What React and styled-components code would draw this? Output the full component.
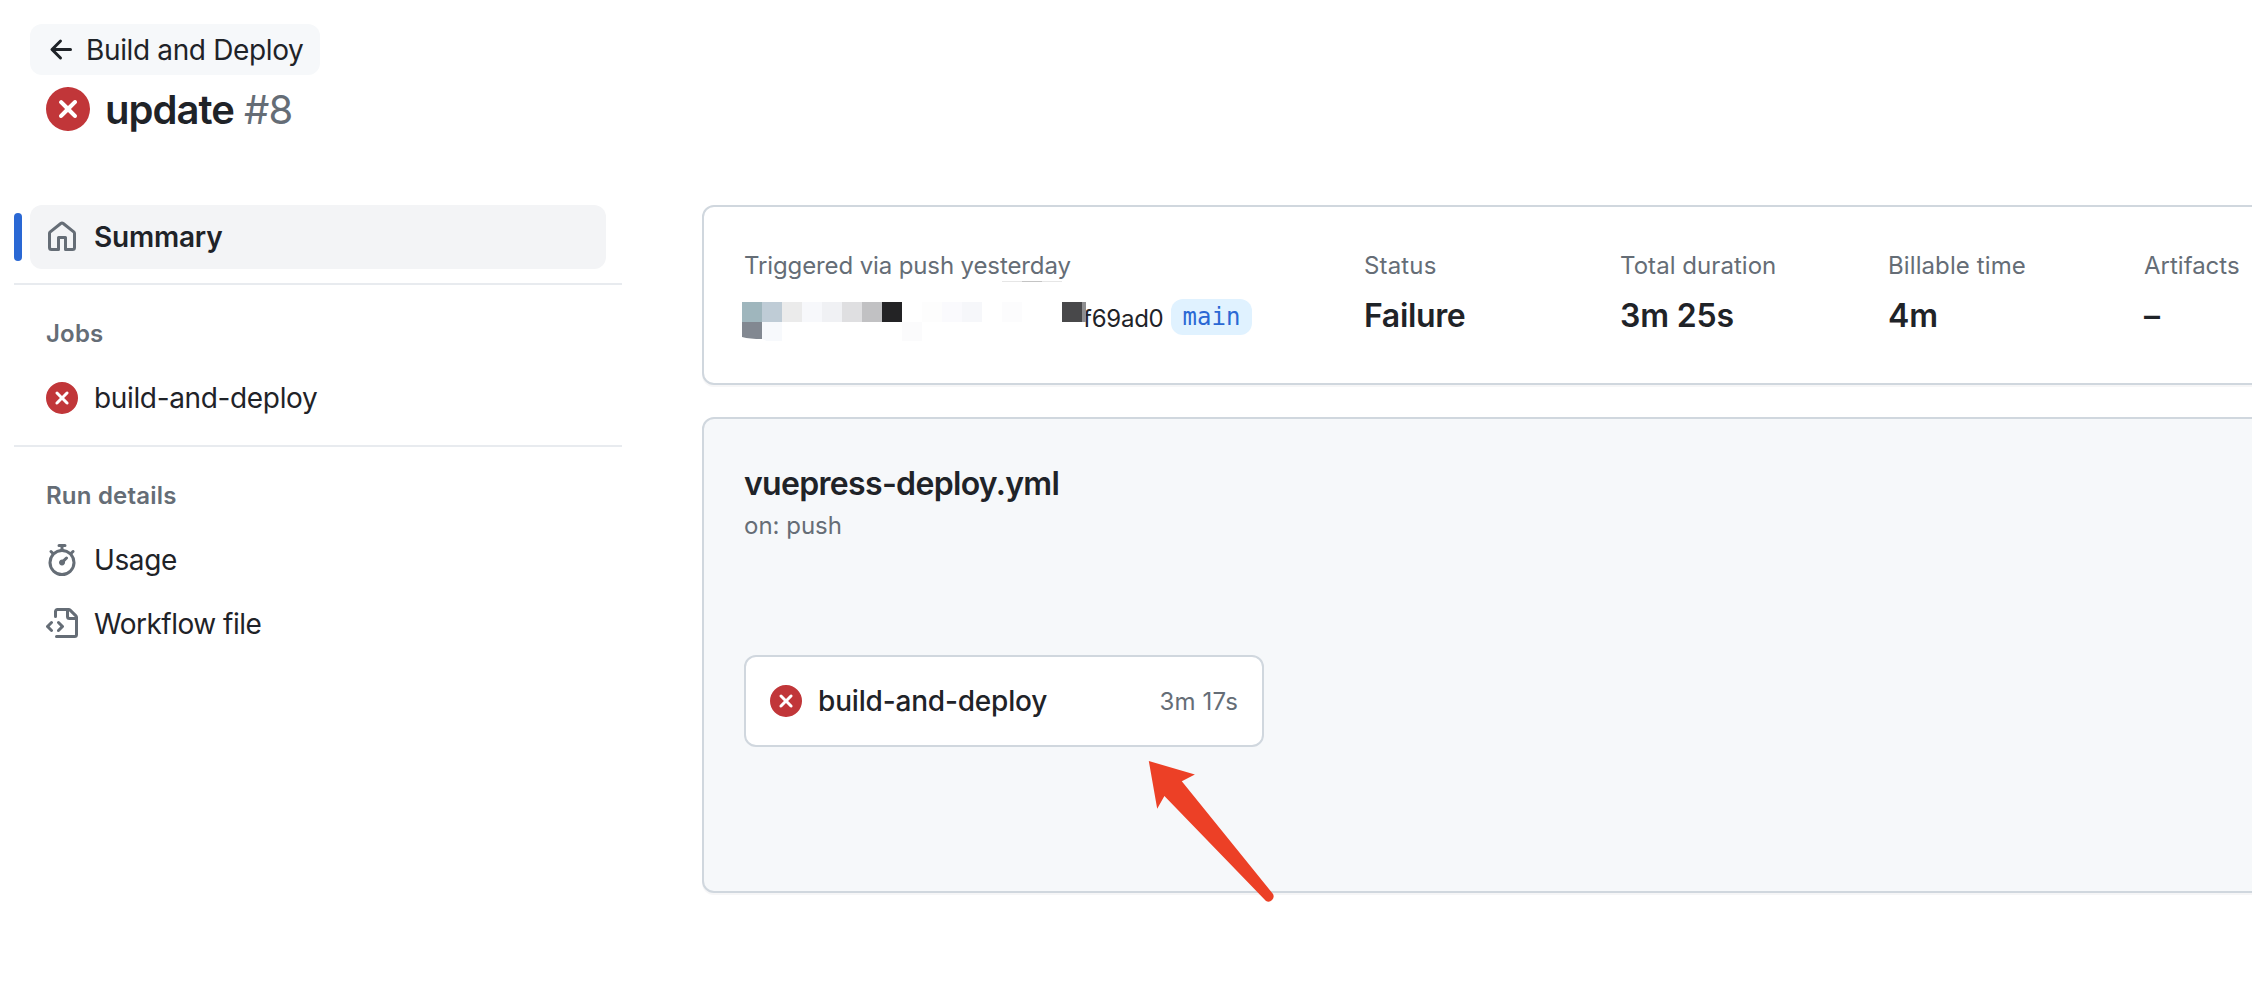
import React from "react";
import styled, { createGlobalStyle } from "styled-components";

const GlobalStyle = createGlobalStyle`
  * { box-sizing: border-box; }
  html, body { margin: 0; background: #fff; overflow: hidden; }
  body {
    font-family: Inter, "Noto Sans", sans-serif;
    font-size: 28px;
    line-height: 40px;
    color: #1f2328;
    -webkit-font-smoothing: antialiased;
  }
`;

const ICONS = {
  arrow:
    "M7.78 12.53a.75.75 0 0 1-1.06 0L2.47 8.28a.75.75 0 0 1 0-1.06l4.25-4.25a.751.751 0 0 1 1.042.018.751.751 0 0 1 .018 1.042L4.81 7h7.44a.75.75 0 0 1 0 1.5H4.81l2.97 2.97a.75.75 0 0 1 0 1.06Z",
  fail:
    "M2.343 13.657A8 8 0 1 1 13.658 2.343 8 8 0 0 1 2.343 13.657ZM6.03 4.97a.751.751 0 0 0-1.042.018.751.751 0 0 0-.018 1.042L6.94 8 4.97 9.97a.749.749 0 0 0 .326 1.275.749.749 0 0 0 .734-.215L8 9.06l1.97 1.97a.749.749 0 0 0 1.275-.326.749.749 0 0 0-.215-.734L9.06 8l1.97-1.97a.749.749 0 0 0-.326-1.275.749.749 0 0 0-.734.215L8 6.94Z",
  home:
    "M6.906.664a1.749 1.749 0 0 1 2.187 0l5.25 4.2c.415.332.657.835.657 1.367v7.019A1.75 1.75 0 0 1 13.25 15h-3.5a.75.75 0 0 1-.75-.75V9H7v5.25a.75.75 0 0 1-.75.75h-3.5A1.75 1.75 0 0 1 1 13.25V6.23c0-.531.242-1.034.657-1.366l5.25-4.2Zm1.25 1.171a.25.25 0 0 0-.312 0l-5.25 4.2a.25.25 0 0 0-.094.196v7.019c0 .138.112.25.25.25H5.5V8.25a.75.75 0 0 1 .75-.75h3.5a.75.75 0 0 1 .75.75v5.25h2.75a.25.25 0 0 0 .25-.25V6.23a.25.25 0 0 0-.094-.195Z",
  stopwatch:
    "M5.75.75A.75.75 0 0 1 6.5 0h3a.75.75 0 0 1 0 1.5h-.75v1l-.001.041a6.724 6.724 0 0 1 3.464 1.435l.007-.006.75-.75a.749.749 0 0 1 1.275.326.749.749 0 0 1-.215.734l-.75.75-.006.007a6.75 6.75 0 1 1-10.548 0L2.72 5.03l-.75-.75a.751.751 0 0 1 .018-1.042.751.751 0 0 1 1.042-.018l.75.75.007.006A6.72 6.72 0 0 1 7.25 2.541V1.5H6.5a.75.75 0 0 1-.75-.75ZM8 14.5a5.25 5.25 0 1 0 0-10.5 5.25 5.25 0 0 0 0 10.5Zm.389-6.7 1.33-1.33a.75.75 0 1 1 1.061 1.06L9.45 8.861A1.503 1.503 0 0 1 8 10.75a1.499 1.499 0 1 1 .389-2.95Z",
  fileCode:
    "M4 1.75C4 .784 4.784 0 5.75 0h5.586c.464 0 .909.184 1.237.513l2.914 2.914c.329.328.513.773.513 1.237v8.586A1.75 1.75 0 0 1 14.25 15h-9a.75.75 0 0 1 0-1.5h9a.25.25 0 0 0 .25-.25V6h-2.75A1.75 1.75 0 0 1 10 4.25V1.5H5.75a.25.25 0 0 0-.25.25v2.5a.75.75 0 0 1-1.5 0Zm1.72 4.97a.75.75 0 0 1 1.06 0l2 2a.75.75 0 0 1 0 1.06l-2 2a.749.749 0 0 1-1.275-.326.749.749 0 0 1 .215-.734l1.47-1.47-1.47-1.47a.75.75 0 0 1 0-1.06ZM3.28 7.78 1.81 9.25l1.47 1.47a.751.751 0 0 1-.018 1.042.751.751 0 0 1-1.042.018l-2-2a.75.75 0 0 1 0-1.06l2-2a.751.751 0 0 1 1.042.018.751.751 0 0 1 .018 1.042Zm8.22-6.218V4.25c0 .138.112.25.25.25h2.688l-.011-.013-2.914-2.914-.013-.011Z",
};

const IconSvg = styled.svg`
  display: block;
  flex: none;
  width: ${(p) => p.$size || 32}px;
  height: ${(p) => p.$size || 32}px;
  fill: ${(p) => p.$color || "#656d76"};
`;

const Icon = ({ name, size, color }) => (
  <IconSvg viewBox="0 0 16 16" $size={size} $color={color} aria-hidden="true">
    <path d={ICONS[name]} />
  </IconSvg>
);

const RED = "#c13639";

const Page = styled.div`
  position: relative;
  width: 2252px;
  height: 988px;
  overflow: hidden;
  background: #fff;
`;

const Header = styled.header`
  display: flex;
  flex-direction: column;
  align-items: flex-start;
  height: 205px;
  padding: 24px 0 0 30px;
`;

const BackLink = styled.a`
  display: flex;
  align-items: center;
  gap: 8px;
  width: 290px;
  height: 51px;
  padding-left: 16px;
  border-radius: 12px;
  background: #f6f8fa;
  white-space: nowrap;
  letter-spacing: -0.36px;
`;

const TitleRow = styled.h1`
  display: flex;
  align-items: center;
  gap: 15px;
  height: 48px;
  margin: 10px 0 0;
  padding-left: 16px;
  font-size: 40px;
  line-height: 48px;
  font-weight: 600;
  letter-spacing: -0.95px;
  white-space: nowrap;
`;

const TitleText = styled.span`
  padding-top: 2px;
`;

const RunNumber = styled.span`
  margin-left: 10px;
  font-weight: 400;
  color: #656d76;
`;

const Body = styled.div`
  display: flex;
`;

const Sidebar = styled.nav`
  flex: none;
  width: 608px;
  margin-left: 14px;
`;

const NavItem = styled.a`
  display: flex;
  align-items: center;
  gap: 16px;
  width: 576px;
  height: 64px;
  margin-left: ${(p) => (p.$active ? 8 : 16)}px;
  padding-left: 16px;
  border-radius: 12px;
  background: ${(p) => (p.$active ? "#f3f4f6" : "transparent")};
  font-weight: ${(p) => (p.$active ? 600 : 400)};
  white-space: nowrap;
  letter-spacing: ${(p) => p.$track || 0}px;
`;

const ActiveRow = styled.div`
  display: flex;
  align-items: center;
`;

const ActiveBar = styled.span`
  width: 8px;
  height: 48px;
  border-radius: 4px;
  background: #2a68d4;
`;

const Divider = styled.hr`
  height: 2px;
  margin: ${(p) => p.$top || 14}px 0 16px;
  border: 0;
  background: #e8ebef;
`;

const GroupTitle = styled.h2`
  height: 65px;
  margin: 0;
  padding: 15px 0 0 32px;
  font-size: 24px;
  line-height: 36px;
  font-weight: 600;
  color: #656d76;
  letter-spacing: 0.2px;
`;

const Main = styled.main`
  display: flex;
  flex-direction: column;
  gap: 32px;
  flex: none;
  width: 1600px;
  margin-left: 80px;
`;

const Card = styled.section`
  border: 2px solid #d0d7de;
  border-radius: 12px;
  box-shadow: 0 2px 0 rgba(31, 35, 40, 0.04);
`;

const SummaryCard = styled(Card)`
  display: grid;
  grid-template-columns: 620px 256px 268px 256px 150px;
  height: 180px;
  padding: 41px 0 0 40px;
  background: #fff;
`;

const Label = styled.div`
  font-size: 24px;
  line-height: 36px;
  color: #656d76;
  white-space: nowrap;
  letter-spacing: ${(p) => p.$track || 0}px;
`;

const Value = styled.div`
  margin-top: 8px;
  font-size: 32px;
  line-height: 48px;
  font-weight: 600;
  white-space: nowrap;
  letter-spacing: ${(p) => p.$track || 0}px;
`;

const TriggerRow = styled.div`
  display: flex;
  align-items: flex-start;
  height: 56px;
  margin-left: -2px;
`;

const Mosaic = styled.svg`
  display: block;
  flex: none;
  width: 344px;
  height: 60px;
  margin-top: -3px;
  position: relative;
  z-index: 1;
`;

const Sha = styled.span`
  width: 88px;
  margin: 17px 0 0 -3px;
  font-size: 24px;
  line-height: 36px;
  letter-spacing: -0.25px;
`;

const Branch = styled.span`
  display: flex;
  align-items: center;
  justify-content: center;
  width: 81px;
  height: 36px;
  margin-top: 15px;
  border-radius: 12px;
  background: #e0f2ff;
  color: #2a68d4;
  font-family: "DejaVu Sans Mono", monospace;
  font-size: 24px;
  line-height: 36px;
`;

const GraphCard = styled(Card)`
  height: 476px;
  padding: 41px 0 0 40px;
  background: #f6f8fa;
`;

const WorkflowName = styled.h3`
  margin: 0;
  font-size: 32px;
  line-height: 48px;
  font-weight: 600;
  letter-spacing: -0.68px;
`;

const JobBox = styled.div`
  display: flex;
  align-items: center;
  width: 520px;
  height: 92px;
  margin-top: 111px;
  padding: 0 24px;
  border: 2px solid #d0d7de;
  border-radius: 12px;
  background: #fff;
`;

const JobName = styled.span`
  flex: 1;
  margin-left: 16px;
  font-weight: 500;
  letter-spacing: -0.18px;
`;

const JobTime = styled(Label)`
  padding-top: 1px;
`;

const Pointer = styled.svg`
  position: absolute;
  left: 1140px;
  top: 750px;
  width: 150px;
  height: 160px;
  fill: #ec4026;
`;

const CELLS = [
  [0, 21, 20, 20, "#9fb6bd"],
  [20, 21, 20, 20, "#bfccd6"],
  [40, 21, 20, 20, "#ebebeb"],
  [60, 21, 20, 20, "#f7f8fb"],
  [80, 21, 20, 20, "#f0f1f4"],
  [100, 21, 20, 20, "#dfdfe1"],
  [120, 21, 20, 20, "#c1c1c3"],
  [140, 21, 20, 20, "#232325"],
  [180, 21, 20, 20, "#fdfdfd"],
  [200, 21, 20, 20, "#fafafd"],
  [220, 21, 20, 20, "#f6f7fa"],
  [260, 21, 20, 20, "#fcfcfd"],
  [320, 21, 20, 20, "#48484a"],
  [340, 21, 4, 20, "#8e8e90"],
  [260, 0, 20, 1, "#e6e6e6"],
  [280, 0, 20, 1, "#c4c4c4"],
  [300, 0, 20, 1, "#e6e6e6"],
  [160, 41, 20, 19, "#fbfbfc"],
];

const Redacted = () => (
  <Mosaic viewBox="0 0 344 60" aria-hidden="true">
    {CELLS.map(([x, y, w, h, c]) => (
      <rect key={`${x}-${y}`} x={x} y={y} width={w} height={h} fill={c} />
    ))}
    <path d="M0 41h20v17q-12 0-20-2Z" fill="#828891" />
    <path d="M20 41h20v20h-13l-7-3Z" fill="#f7f9fc" />
  </Mosaic>
);

export default function App() {
  return (
    <Page>
      <GlobalStyle />
      <Header>
        <BackLink>
          <Icon name="arrow" color="#1f2328" />
          <span>Build and Deploy</span>
        </BackLink>
        <TitleRow>
          <Icon name="fail" size={44} color={RED} />
          <TitleText>
            update<RunNumber>#8</RunNumber>
          </TitleText>
        </TitleRow>
      </Header>
      <Body>
        <Sidebar>
          <ActiveRow>
            <ActiveBar />
            <NavItem $active $track={-0.2}>
              <Icon name="home" />
              <span>Summary</span>
            </NavItem>
          </ActiveRow>
          <Divider />
          <GroupTitle>Jobs</GroupTitle>
          <NavItem $track={-0.35}>
            <Icon name="fail" color={RED} />
            <span>build-and-deploy</span>
          </NavItem>
          <Divider $top={15} />
          <GroupTitle>Run details</GroupTitle>
          <NavItem $track={-0.4}>
            <Icon name="stopwatch" />
            <span>Usage</span>
          </NavItem>
          <NavItem $track={-0.5}>
            <Icon name="fileCode" />
            <span>Workflow file</span>
          </NavItem>
        </Sidebar>
        <Main>
          <SummaryCard>
            <div>
              <Label $track={-0.12}>Triggered via push yesterday</Label>
              <TriggerRow>
                <Redacted />
                <Sha>f69ad0</Sha>
                <Branch>main</Branch>
              </TriggerRow>
            </div>
            <div>
              <Label $track={0.15}>Status</Label>
              <Value $track={-0.35}>Failure</Value>
            </div>
            <div>
              <Label $track={0.05}>Total duration</Label>
              <Value $track={-0.15}>3m 25s</Value>
            </div>
            <div>
              <Label $track={0.1}>Billable time</Label>
              <Value $track={-0.15}>4m</Value>
            </div>
            <div>
              <Label>Artifacts</Label>
              <Value>–</Value>
            </div>
          </SummaryCard>
          <GraphCard>
            <WorkflowName>vuepress-deploy.yml</WorkflowName>
            <Label>on: push</Label>
            <JobBox>
              <Icon name="fail" color={RED} />
              <JobName>build-and-deploy</JobName>
              <JobTime $track={0.15}>3m 17s</JobTime>
            </JobBox>
          </GraphCard>
        </Main>
      </Body>
      <Pointer viewBox="0 0 150 160" aria-hidden="true">
        <path d="M8.800 11 54.900 24.600 41.800 31.200 133 144a5.200 5.200 0 0 1-7 7L24.400 46 17.200 58.700Z" />
      </Pointer>
    </Page>
  );
}
